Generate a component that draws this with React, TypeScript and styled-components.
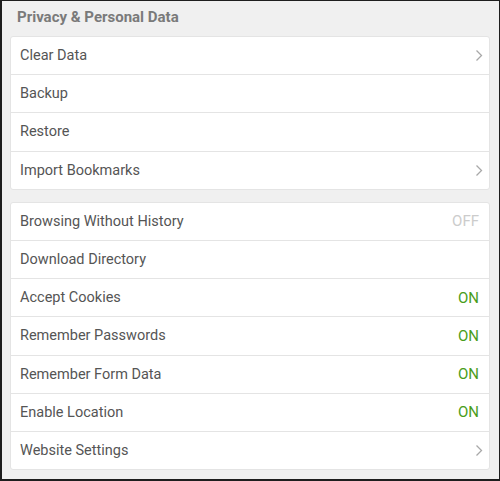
import styled, { createGlobalStyle } from "styled-components";

const colors = {
    frame: "#1e1e1e",
    page: "#f0f0f0",
    card: "#ffffff",
    line: "#e4e4e4",
    text: "#555555",
    header: "#7a7a7a",
    on: "#4a9d1a",
    off: "#cccccc",
    chevron: "#a8a8a8",
};

const GlobalStyle = createGlobalStyle`
    html, body {
        margin: 0;
        padding: 0;
        background: ${colors.frame};
    }
    * {
        box-sizing: border-box;
    }
`;

const Screen = styled.div`
    width: 500px;
    height: 481px;
    border: 1px solid ${colors.frame};
    border-left-width: 2px;
    border-bottom-width: 2px;
    background: ${colors.page};
    font-family: Roboto, "Liberation Sans", sans-serif;
    padding: 0 9px 0 8px;
    overflow: hidden;
`;

const SectionTitle = styled.div`
    height: 35px;
    padding: 7px 0 0 7px;
    font-size: 15px;
    font-weight: bold;
    color: ${colors.header};
`;

const Card = styled.div<{ $gap?: number }>`
    background: ${colors.card};
    border: 1px solid ${colors.line};
    border-radius: 3px;
    margin-top: ${(p) => p.$gap ?? 0}px;
`;

const Row = styled.div`
    height: 38.2px;
    display: flex;
    align-items: center;
    justify-content: space-between;
    padding: 0 10px 0 9px;
    font-size: 14.5px;
    color: ${colors.text};

    &:first-child {
        height: 37.2px;
    }

    & + & {
        border-top: 1px solid ${colors.line};
    }
`;

const State = styled.span<{ $on: boolean }>`
    font-size: 15px;
    color: ${(p) => (p.$on ? colors.on : colors.off)};
`;

const Chevron = () => (
    <svg width="8" height="13" viewBox="0 0 8 13" style={{ marginRight: -4 }}>
        <polyline points="1.5,1.5 6.5,6.5 1.5,11.5" fill="none" stroke={colors.chevron} strokeWidth="1.3" />
    </svg>
);

type Item = { label: string; state?: "on" | "off"; arrow?: boolean };

const first: Item[] = [
    { label: "Clear Data", arrow: true },
    { label: "Backup" },
    { label: "Restore" },
    { label: "Import Bookmarks", arrow: true },
];

const second: Item[] = [
    { label: "Browsing Without History", state: "off" },
    { label: "Download Directory" },
    { label: "Accept Cookies", state: "on" },
    { label: "Remember Passwords", state: "on" },
    { label: "Remember Form Data", state: "on" },
    { label: "Enable Location", state: "on" },
    { label: "Website Settings", arrow: true },
];

const renderRow = (item: Item) => (
    <Row key={item.label}>
        <span>{item.label}</span>
        {item.state && <State $on={item.state === "on"}>{item.state.toUpperCase()}</State>}
        {item.arrow && <Chevron />}
    </Row>
);

export default function App() {
    return (
        <>
            <GlobalStyle />
            <Screen>
                <SectionTitle>Privacy &amp; Personal Data</SectionTitle>
                <Card>{first.map(renderRow)}</Card>
                <Card $gap={12}>{second.map(renderRow)}</Card>
            </Screen>
        </>
    );
}
